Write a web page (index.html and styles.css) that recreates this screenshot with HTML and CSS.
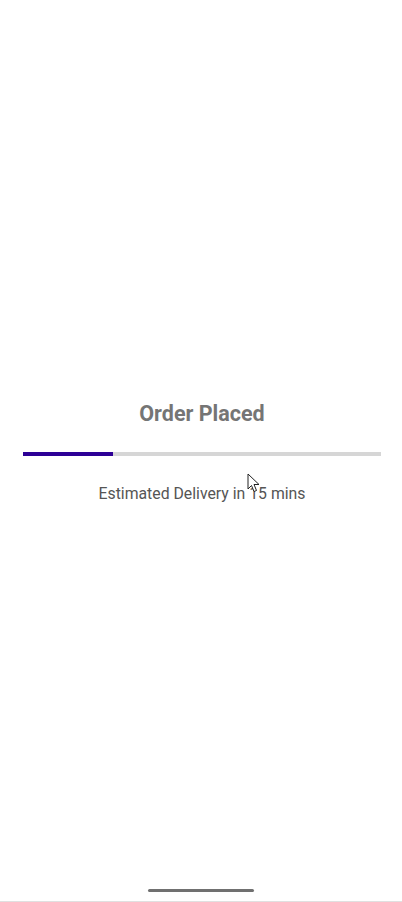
FILE: index.html
```html
<!DOCTYPE html>
<html>
<head>
<meta charset="utf-8">
<link rel="stylesheet" href="styles.css">
</head>
<body>
<div class="screen">
  <main class="content">
    <h1 class="title">Order Placed</h1>
    <div class="track"><div class="fill" style="width:25%"></div></div>
    <p class="eta">Estimated Delivery in 15 mins</p>
  </main>
  <div class="navbar"><div class="handle"></div></div>
  <svg class="cursor" width="16" height="22" viewBox="0 0 16 22">
    <path d="M1 1 L1 16 L4.5 12.5 L7 18.5 L9.5 17.5 L7 11.5 L12 11.5 Z" fill="#fff" stroke="#222" stroke-width="1" stroke-linejoin="miter"/>
  </svg>
</div>
</body>
</html>
```
FILE: styles.css
```css
html, body {
  margin: 0;
  padding: 0;
  background: #fff;
}
.screen {
  position: relative;
  width: 402px;
  height: 902px;
  display: flex;
  flex-direction: column;
  font-family: Roboto, "Noto Sans", sans-serif;
  overflow: hidden;
}
.content {
  flex: 1;
  display: flex;
  flex-direction: column;
  align-items: center;
  justify-content: center;
  padding: 28px 21px 0 23px;
}
.title {
  margin: 0;
  font-size: 21.5px;
  font-weight: 700;
  color: #757575;
  line-height: 24px;
}
.track {
  align-self: stretch;
  height: 4px;
  background: #d6d6d6;
  margin-top: 26px;
}
.fill {
  height: 100%;
  background: #2d0096;
}
.eta {
  margin: 28px 0 0;
  font-size: 15.8px;
  color: #555;
  line-height: 20px;
}
.navbar {
  height: 24px;
  display: flex;
  justify-content: center;
  align-items: flex-start;
  border-bottom: 1px solid #e0e0e0;
  box-sizing: border-box;
}
.handle {
  width: 106px;
  height: 3px;
  background: #707070;
  border-radius: 2px;
  margin-top: 11px;
}
.cursor {
  position: absolute;
  left: 247px;
  top: 473px;
}
```
